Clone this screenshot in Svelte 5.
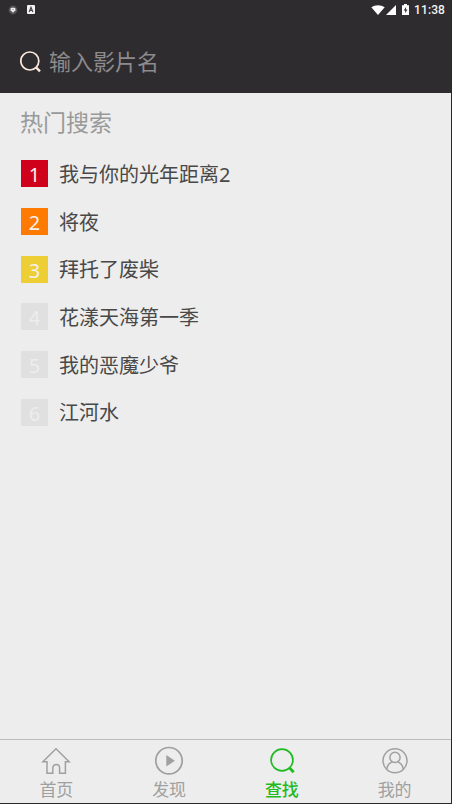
<script lang="ts">
  interface HotItem {
    title: string;
    color?: string;
  }

  type TabId = 'home' | 'discover' | 'search' | 'mine';

  // 热门搜索列表，前三名使用彩色角标
  const hotList: HotItem[] = [
    { title: '我与你的光年距离2', color: '#d0021b' },
    { title: '将夜', color: '#ff7a00' },
    { title: '拜托了废柴', color: '#edce34' },
    { title: '花漾天海第一季' },
    { title: '我的恶魔少爷' },
    { title: '江河水' }
  ];

  const tabs: { id: TabId; label: string }[] = [
    { id: 'home', label: '首页' },
    { id: 'discover', label: '发现' },
    { id: 'search', label: '查找' },
    { id: 'mine', label: '我的' }
  ];

  let active: TabId = $state('search');
  let keyword = $state('');
</script>

<div class="app">
  <!-- 状态栏 -->
  <div class="status-bar">
    <div class="status-left">
      <svg width="10" height="10" viewBox="0 0 10 10">
        <circle cx="5" cy="5" r="4.4" fill="#565356" />
        <path d="M2.6 3.2 5 2.5l2.4.7v2L5 7.8 2.6 5.2z" fill="#eee" />
        <path d="M4.2 4.2h1.6L5 5.5z" fill="#777" />
      </svg>
      <svg width="8" height="9" viewBox="0 0 8 9">
        <rect width="8" height="9" rx="1" fill="#f2f2f2" />
        <path d="M2.1 7 4 2.2 5.9 7M2.9 5.4h2.2" fill="none" stroke="#444" stroke-width="1.1" />
      </svg>
    </div>
    <div class="status-right">
      <svg width="14" height="10" viewBox="0 0 14 10">
        <path d="M.3 2.3C4.2-.5 9.8-.5 13.7 2.3L7 10z" fill="#fff" />
      </svg>
      <svg class="signal" width="10" height="10" viewBox="0 0 10 10">
        <path d="M10 0v10H0z" fill="#fff" />
      </svg>
      <svg class="battery" width="7" height="11" viewBox="0 0 7 11">
        <path d="M2 0h3v1.2h2V11H0V1.2h2z" fill="#fff" />
        <path d="M4.2 2.8 1.7 6.5h1.5v2.7l2.3-3.7H3.9z" fill="#333" />
      </svg>
      <span class="clock">11:38</span>
    </div>
  </div>

  <!-- 搜索栏 -->
  <label class="search-bar">
    <svg width="22" height="22" viewBox="0 0 22 22" fill="none" stroke="#fbe9df">
      <circle cx="9.8" cy="10" r="9" stroke-width="1.7" />
      <path d="m15.8 16.2 4.2 4.1" stroke-width="2.4" />
    </svg>
    <input type="text" placeholder="输入影片名" bind:value={keyword} />
  </label>

  <!-- 热门搜索 -->
  <main class="content">
    <h2>热门搜索</h2>
    <ol>
      {#each hotList as item, i}
        <li>
          <span class="rank" class:plain={!item.color} style:background={item.color}>{i + 1}</span>
          <span class="title">{item.title}</span>
        </li>
      {/each}
    </ol>
  </main>

  <!-- 底部导航 -->
  <nav class="tab-bar">
    {#each tabs as tab}
      <button class="tab" class:active={active === tab.id} onclick={() => (active = tab.id)}>
        <svg width="30" height="30" viewBox="0 0 30 30" fill="none" stroke="currentColor" stroke-width="1.5">
          {#if tab.id === 'home'}
            <path d="M1.9 15.8 15 2.7l13.1 13.1h-3.7v11.4h-5.8v-5.1c0-4.8-6.8-4.8-6.8 0v5.1H6V15.8z" />
          {:else if tab.id === 'discover'}
            <circle cx="15" cy="14.7" r="13.2" stroke-width="1.7" />
            <path d="M12.3 9.1v11.4l8.6-5.7z" fill="currentColor" stroke="none" />
          {:else if tab.id === 'search'}
            <circle cx="15" cy="14" r="10.9" stroke-width="1.7" />
            <path d="m22.2 21.5 1.4 1.5" stroke-width="1.7" />
            <path d="m23.1 22.4 3.5 3.9" stroke-width="2.9" />
          {:else}
            <circle cx="15" cy="14.7" r="12" />
            <circle cx="15" cy="11.4" r="5.1" />
            <path d="M6.700 23.3c.7-4 3.1-6.7 5.8-7.5M23.3 23.3c-.7-4-3.1-6.7-5.8-7.5" />
          {/if}
        </svg>
        <span>{tab.label}</span>
      </button>
    {/each}
  </nav>
</div>

<style>
  :global(body) {
    margin: 0;
    background: #29272a;
  }

  .app {
    box-sizing: border-box;
    width: 452px;
    height: 804px;
    display: flex;
    flex-direction: column;
    border-right: 1px solid #29272a;
    border-bottom: 1px solid #29272a;
    background: #ededed;
    font-family: 'Noto Sans', 'Noto Sans CJK SC', sans-serif;
    overflow: hidden;
  }

  svg {
    display: block;
    flex: none;
  }

  /* 状态栏 */
  .status-bar {
    height: 19px;
    display: flex;
    justify-content: space-between;
    align-items: center;
    padding: 0 6px 0 8px;
    background: #2f2c2f;
  }

  .status-left,
  .status-right {
    display: flex;
    align-items: center;
  }

  .status-left {
    gap: 9px;
  }

  .signal {
    margin-left: 1px;
  }

  .battery {
    margin-left: 6px;
  }

  .clock {
    margin-left: 5px;
    padding-top: 2px;
    font-family: Roboto, sans-serif;
    font-size: 12px;
    font-weight: 500;
    line-height: 17px;
    letter-spacing: 0.1px;
    color: #f4f4f4;
  }

  /* 搜索栏 */
  .search-bar {
    box-sizing: border-box;
    height: 74px;
    display: flex;
    align-items: center;
    gap: 7px;
    padding: 12px 20px 0;
    background: #2f2c2f;
  }

  .search-bar input {
    flex: 1;
    height: 36px;
    padding: 0 0 2px;
    box-sizing: border-box;
    border: 0;
    outline: 0;
    background: none;
    font-family: inherit;
    font-size: 22px;
    color: #eee;
  }

  .search-bar input::placeholder {
    color: #8d8b8d;
    opacity: 1;
  }

  /* 热门搜索 */
  .content {
    flex: 1;
    padding: 13px 21px 0 20px;
  }

  h2 {
    margin: 0;
    font-size: 23px;
    font-weight: 400;
    line-height: 32px;
    color: #999;
  }

  ol {
    margin: 12px 0 0;
    padding: 0 0 0 1px;
    list-style: none;
  }

  li {
    height: 47.7px;
    display: flex;
    align-items: center;
  }

  .rank {
    width: 27px;
    height: 27px;
    line-height: 30px;
    text-align: center;
    font-size: 20px;
    color: #f4f1ee;
  }

  .rank.plain {
    background: #e0e0e0;
    color: #ededed;
  }

  .title {
    margin-left: 11px;
    padding-top: 2px;
    font-size: 20px;
    line-height: 28px;
    color: #484848;
  }

  /* 底部导航 */
  .tab-bar {
    box-sizing: border-box;
    height: 64px;
    display: flex;
    border-top: 1px solid #bdbdbd;
  }

  .tab {
    flex: 1;
    display: flex;
    flex-direction: column;
    align-items: center;
    gap: 2px;
    padding: 6px 0 0;
    border: 0;
    background: none;
    font-family: inherit;
    font-size: 17px;
    line-height: 24px;
    color: #a0a0a0;
    cursor: pointer;
  }

  .tab.active {
    color: #1fbb22;
  }

  .tab.active span {
    font-weight: 500;
  }
</style>
